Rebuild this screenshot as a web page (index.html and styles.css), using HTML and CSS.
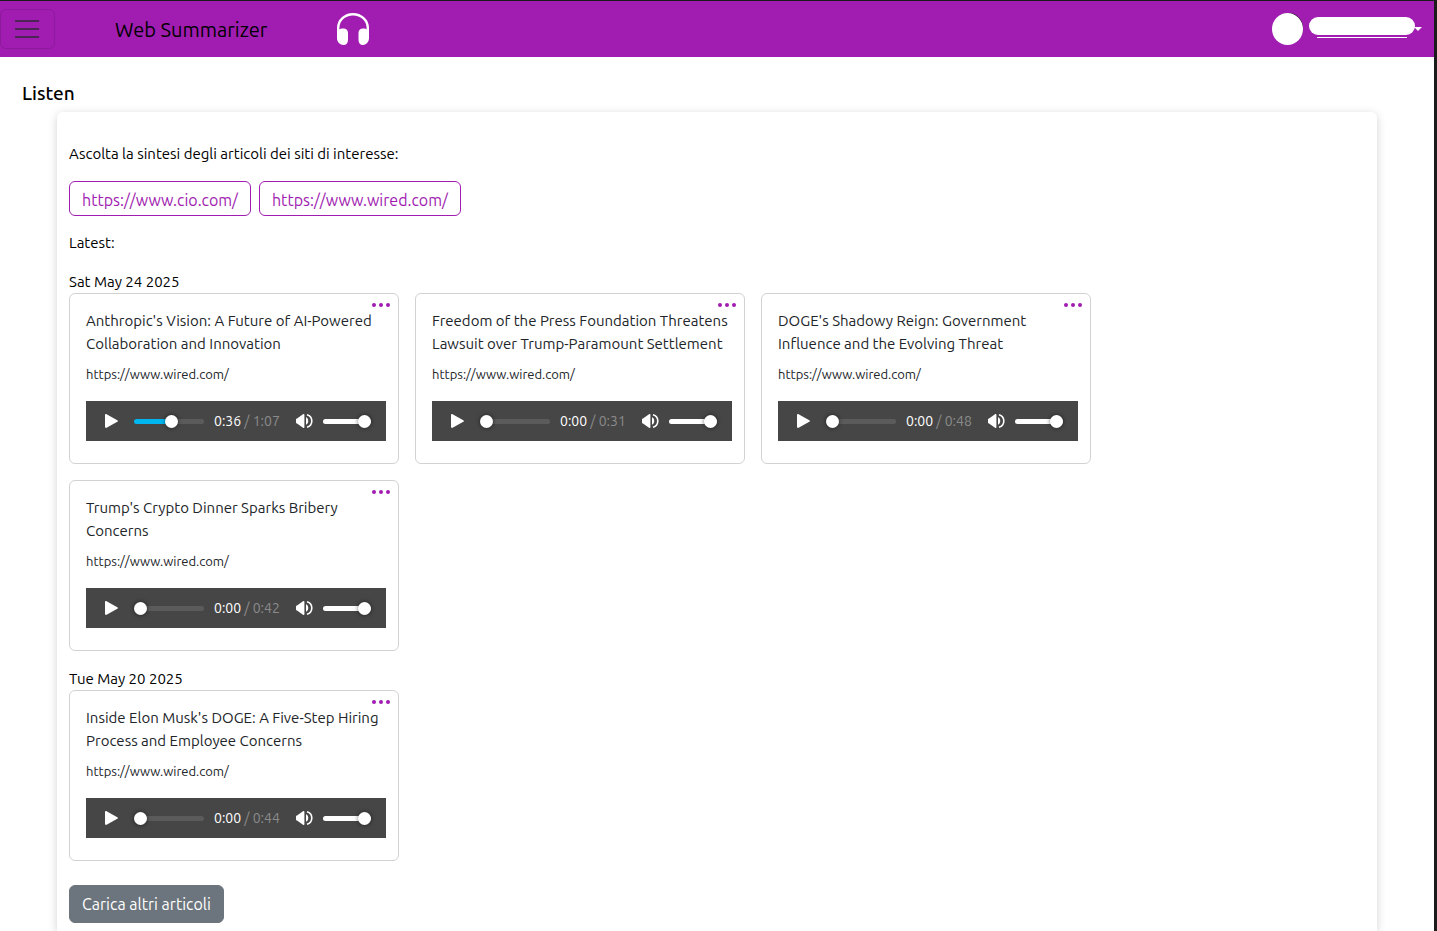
FILE: index.html
```html
<!DOCTYPE html>
<html lang="it">
<head>
<meta charset="utf-8">
<meta name="viewport" content="width=device-width, initial-scale=1">
<title>Web Summarizer</title>
<link rel="stylesheet" href="styles.css">
</head>
<body>
<svg class="sprite" aria-hidden="true">
  <symbol id="play" viewBox="0 0 13 14"><path d="M0 1.2C0 .2.8-.2 1.6.2L12.3 6.2c.9.5.9 1.1 0 1.6L1.6 13.8C.8 14.2 0 13.800 0 12.800Z"/></symbol>
  <symbol id="volume" viewBox="0 0 17 14"><path d="M0 5.500Q0 4.600 1 4.600L7 .3C7.800-.2 8.400 0 8.400.7v12.600c0 .7-.6.900-1.400.4L1 9.400Q0 9.400 0 8.500Z"/><path d="M10 3.300c3 1 3 6.400 0 7.400Z"/><path d="M11 .8c6.400 1.800 6.400 10.600 0 12.400" fill="none" stroke="currentColor" stroke-width="1.600"/></symbol>
  <symbol id="dots" viewBox="0 0 18 4"><circle cx="2" cy="2" r="2"/><circle cx="9" cy="2" r="2"/><circle cx="16" cy="2" r="2"/></symbol>
</svg>

<header class="navbar">
  <button class="toggler" type="button" aria-label="Menu"><svg viewBox="0 0 24 18"><path d="M0 1h24M0 9h24M0 17h24"/></svg></button>
  <a class="brand" href="#">Web Summarizer</a>
  <svg class="headphones" viewBox="0 0 32 32" aria-hidden="true"><path d="M1.200 23V15a14.800 13.800 0 0 1 29.600 0v8" fill="none" stroke="#fff" stroke-width="2.400"/><path d="M0 18c2-1.800 4-2.400 6.500-2.400 2.800 0 4.500 1.800 4.500 4.400v7c0 3-1.800 5-4.500 5C3 32 0 29 0 25ZM32 18c-2-1.800-4-2.400-6-2.400-2.800 0-4.500 1.800-4.500 4.400v7c0 3 1.800 5 4.500 5 3 0 6-3 6-7Z" fill="#fff"/></svg>
  <button class="account" type="button" aria-label="Account">
    <span class="avatar"></span>
    <span class="user"><span class="user-name"></span><span class="user-line"></span></span>
    <span class="caret"></span>
  </button>
</header>

<main>
  <h1>Listen</h1>
  <section class="panel">
    <p class="intro">Ascolta la sintesi degli articoli dei siti di interesse:</p>
    <nav class="sites"><a href="#">https://www.cio.com/</a><a href="#">https://www.wired.com/</a></nav>
    <p class="latest">Latest:</p>

    <h2>Sat May 24 2025</h2>
    <div class="cards">
      <article class="card">
        <button class="more" type="button" aria-label="Opzioni"><svg><use href="#dots"/></svg></button>
        <h3>Anthropic's Vision: A Future of AI-Powered Collaboration and Innovation</h3>
        <p>https://www.wired.com/</p>
        <div class="player">
          <button class="play" type="button" aria-label="Play"><svg><use href="#play"/></svg></button>
          <input class="seek" type="range" aria-label="Posizione" min="0" max="67" value="36" style="--fill:54%">
          <span class="time">0:36 <span>/ 1:07</span></span>
          <button class="mute" type="button" aria-label="Audio"><svg><use href="#volume"/></svg></button>
          <input class="volume" type="range" aria-label="Volume" value="100">
        </div>
      </article>
      <article class="card">
        <button class="more" type="button" aria-label="Opzioni"><svg><use href="#dots"/></svg></button>
        <h3>Freedom of the Press Foundation Threatens Lawsuit over Trump-Paramount Settlement</h3>
        <p>https://www.wired.com/</p>
        <div class="player">
          <button class="play" type="button" aria-label="Play"><svg><use href="#play"/></svg></button>
          <input class="seek" type="range" aria-label="Posizione" min="0" max="31" value="0">
          <span class="time">0:00 <span>/ 0:31</span></span>
          <button class="mute" type="button" aria-label="Audio"><svg><use href="#volume"/></svg></button>
          <input class="volume" type="range" aria-label="Volume" value="100">
        </div>
      </article>
      <article class="card">
        <button class="more" type="button" aria-label="Opzioni"><svg><use href="#dots"/></svg></button>
        <h3>DOGE's Shadowy Reign: Government Influence and the Evolving Threat</h3>
        <p>https://www.wired.com/</p>
        <div class="player">
          <button class="play" type="button" aria-label="Play"><svg><use href="#play"/></svg></button>
          <input class="seek" type="range" aria-label="Posizione" min="0" max="48" value="0">
          <span class="time">0:00 <span>/ 0:48</span></span>
          <button class="mute" type="button" aria-label="Audio"><svg><use href="#volume"/></svg></button>
          <input class="volume" type="range" aria-label="Volume" value="100">
        </div>
      </article>
      <article class="card">
        <button class="more" type="button" aria-label="Opzioni"><svg><use href="#dots"/></svg></button>
        <h3>Trump's Crypto Dinner Sparks Bribery Concerns</h3>
        <p>https://www.wired.com/</p>
        <div class="player">
          <button class="play" type="button" aria-label="Play"><svg><use href="#play"/></svg></button>
          <input class="seek" type="range" aria-label="Posizione" min="0" max="42" value="0">
          <span class="time">0:00 <span>/ 0:42</span></span>
          <button class="mute" type="button" aria-label="Audio"><svg><use href="#volume"/></svg></button>
          <input class="volume" type="range" aria-label="Volume" value="100">
        </div>
      </article>
    </div>

    <h2>Tue May 20 2025</h2>
    <div class="cards">
      <article class="card">
        <button class="more" type="button" aria-label="Opzioni"><svg><use href="#dots"/></svg></button>
        <h3>Inside Elon Musk's DOGE: A Five-Step Hiring Process and Employee Concerns</h3>
        <p>https://www.wired.com/</p>
        <div class="player">
          <button class="play" type="button" aria-label="Play"><svg><use href="#play"/></svg></button>
          <input class="seek" type="range" aria-label="Posizione" min="0" max="44" value="0">
          <span class="time">0:00 <span>/ 0:44</span></span>
          <button class="mute" type="button" aria-label="Audio"><svg><use href="#volume"/></svg></button>
          <input class="volume" type="range" aria-label="Volume" value="100">
        </div>
      </article>
    </div>

    <button class="load-more" type="button">Carica altri articoli</button>
  </section>
</main>
</body>
</html>
```

FILE: styles.css
```css
* { box-sizing: border-box; }

body {
  display: flex;
  flex-direction: column;
  min-height: 100vh;
  margin: 0;
  border-top: 1px solid #1b1b1b;
  border-right: 3px solid #1b1b1b;
  background: #fff;
  color: #000;
  font: 15px/23px Ubuntu, "Noto Sans", sans-serif;
}

h1, h2, h3, p { margin: 0; font-weight: 400; }
button { padding: 0; border: 0; background: none; color: inherit; font: inherit; }
svg { display: block; fill: currentColor; }
.sprite { position: absolute; width: 0; height: 0; }

.navbar {
  display: flex;
  align-items: center;
  height: 56px;
  padding-right: 12px;
  background: #a11db1;
}
.toggler {
  width: 55px;
  height: 40px;
  padding: 0 14px;
  border: 1px solid #8d1a9c;
  border-radius: 6px;
}
.toggler svg { width: 24px; height: 18px; stroke: #4d2456; stroke-width: 2; }
.brand {
  flex: none;
  width: 282px;
  padding-left: 60px;
  color: #000;
  font-size: 20px;
  white-space: nowrap;
  text-decoration: none;
}
.headphones { flex: none; width: 32px; height: 32px; }

.account { display: flex; align-items: center; margin-left: auto; }
.avatar {
  width: 31px;
  height: 32px;
  margin-right: 6px;
  border-radius: 50%;
  background: #fff;
  box-shadow: 1px -1px 0 -1px #000;
}
.user { display: flex; flex-direction: column; align-items: center; gap: 2px; margin-top: -4px; }
.user-name { width: 106px; height: 18px; border-radius: 9px; background: #fff; }
.user-line { width: 90px; height: 1px; background: #fff; }
.caret {
  margin-left: -1px;
  border: 4px solid transparent;
  border-top-color: #fff;
  border-bottom: 0;
}

main { display: flex; flex: 1; flex-direction: column; padding-top: 24px; }
h1 { margin-left: 22px; font-size: 19px; font-weight: 500; line-height: 24px; }
.panel {
  flex: 1;
  margin: 7px 57px 0;
  padding: 30px 12px 8px;
  border-radius: 6px 6px 0 0;
  box-shadow: 0 2px 10px rgba(0, 0, 0, .18);
}
.sites { display: flex; flex-wrap: wrap; gap: 8px; margin: 16px 0 15px; }
.sites a {
  height: 35px;
  padding: 0 12px;
  border: 1px solid #a11db1;
  border-radius: 6px;
  color: #a11db1;
  font-size: 16px;
  line-height: 36px;
  text-decoration: none;
}
h2 { margin-top: 17px; font-size: 15px; line-height: 22px; }

.cards { display: flex; flex-wrap: wrap; gap: 16px; margin-bottom: 17px; }
.card {
  position: relative;
  width: 330px;
  padding: 15px 12px 22px 16px;
  border: 1px solid #d2d2d2;
  border-radius: 6px;
  color: #212529;
}
.more { position: absolute; top: 9px; right: 8px; color: #a11db1; }
.more svg { width: 18px; height: 4px; }
.card h3 { font-size: 15px; }
.card p { margin: 9px 0 17px; font-size: 13px; line-height: 20px; }

.player {
  display: flex;
  align-items: center;
  height: 40px;
  padding: 0 15px 0 19px;
  background: #464646;
  color: #fff;
}
.play svg { width: 13px; height: 14px; }
.mute svg { width: 17px; height: 14px; }
.seek { width: 70px; margin: 0 10px 0 16px; }
.time { flex: 1; font-size: 14px; white-space: nowrap; }
.time span { color: #8b8b8b; }
.volume { width: 48px; margin: 0 0 0 10px; --fill: 100%; --played: #fff; }

input[type="range"] {
  height: 13px;
  appearance: none;
  background: none;
}
input[type="range"]::-webkit-slider-runnable-track {
  height: 5px;
  border-radius: 3px;
  background: linear-gradient(to right, var(--played, #00b6f0) var(--fill, 0%), #5b5b5b var(--fill, 0%));
}
input[type="range"]::-webkit-slider-thumb {
  width: 13px;
  height: 13px;
  margin-top: -4px;
  appearance: none;
  border-radius: 50%;
  background: #fff;
  box-shadow: 0 0 4px rgba(0, 0, 0, .6);
}

.load-more {
  height: 38px;
  margin-top: 7px;
  padding: 0 12px;
  border: 1px solid #6c757d;
  border-radius: 6px;
  background: #6c757d;
  color: #fff;
  font-size: 16px;
}
```
